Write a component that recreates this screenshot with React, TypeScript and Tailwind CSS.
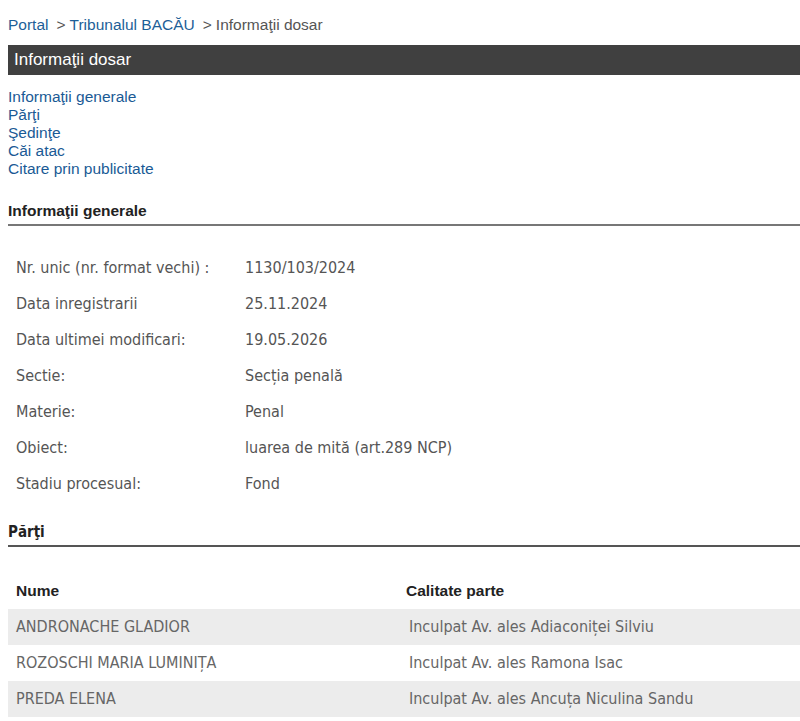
const info: [string, string][] = [
  ["Nr. unic (nr. format vechi) :", "1130/103/2024"],
  ["Data inregistrarii", "25.11.2024"],
  ["Data ultimei modificari:", "19.05.2026"],
  ["Sectie:", "Secția penală"],
  ["Materie:", "Penal"],
  ["Obiect:", "luarea de mită (art.289 NCP)"],
  ["Stadiu procesual:", "Fond"],
];

const parti: [string, string][] = [
  ["ANDRONACHE GLADIOR", "Inculpat Av. ales Adiaconiței Silviu"],
  ["ROZOSCHI MARIA LUMINIȚA", "Inculpat Av. ales Ramona Isac"],
  ["PREDA ELENA", "Inculpat Av. ales Ancuța Niculina Sandu"],
];

const links = [
  "Informaţii generale",
  "Părţi",
  "Şedinţe",
  "Căi atac",
  "Citare prin publicitate",
];

export default function App() {
  return (
    <div className="w-[800px] h-[721px] overflow-hidden bg-white pl-2 font-['Liberation_Sans',Arial,sans-serif]">
      {/* breadcrumb */}
      <div className="h-[45px] pt-[15px] text-[15.5px] leading-[20px]">
        <a className="text-[#1d5f98]">Portal</a>
        <span className="ml-[8px] mr-[4px] text-[#555]">&gt;</span>
        <a className="text-[#1d5f98]">Tribunalul BACĂU</a>
        <span className="ml-[8px] mr-[4px] text-[#555]">&gt;</span>
        <span className="text-[#555]">Informaţii dosar</span>
      </div>

      <div className="h-[30px] bg-[#404040] px-[6px] text-[17px] leading-[30px] text-white">
        Informaţii dosar
      </div>

      <ul className="mt-[13px] text-[15.5px] leading-[18px] text-[#1a5a95]">
        {links.map((l) => (
          <li key={l}>
            <a>{l}</a>
          </li>
        ))}
      </ul>

      <div className="mt-[23px] border-b-2 border-[#777] pb-[3px] text-[15.5px] font-bold leading-[20px] text-[#222]">
        Informaţii generale
      </div>

      <div className="pt-[24px] pl-2 font-['DejaVu_Sans_Condensed','DejaVu_Sans',sans-serif] text-[16px] text-[#555]">
        {info.map(([k, v]) => (
          <div key={k} className="flex h-[36px] items-center">
            <div className="w-[229px]">{k}</div>
            <div>{v}</div>
          </div>
        ))}
      </div>

      <div className="mt-[20px] border-b-2 border-[#555] pb-[3px] font-['DejaVu_Sans_Condensed','DejaVu_Sans',sans-serif] text-[15px] font-bold leading-[20px] text-[#222]">
        Părţi
      </div>

      <table className="mt-[25px] w-full text-[16px]">
        <thead>
          <tr className="h-[37px] text-left text-[15.5px] text-[#222]">
            <th className="w-[398px] pl-2 font-bold">Nume</th>
            <th className="font-bold">Calitate parte</th>
          </tr>
        </thead>
        <tbody className="font-['DejaVu_Sans_Condensed','DejaVu_Sans',sans-serif] text-[#666]">
          {parti.map(([n, c], i) => (
            <tr key={n} className={`h-[36px] ${i % 2 === 0 ? "bg-[#ececec]" : "bg-white"}`}>
              <td className="pl-2">{n}</td>
              <td className="pl-[3px]">{c}</td>
            </tr>
          ))}
        </tbody>
      </table>
    </div>
  );
}
